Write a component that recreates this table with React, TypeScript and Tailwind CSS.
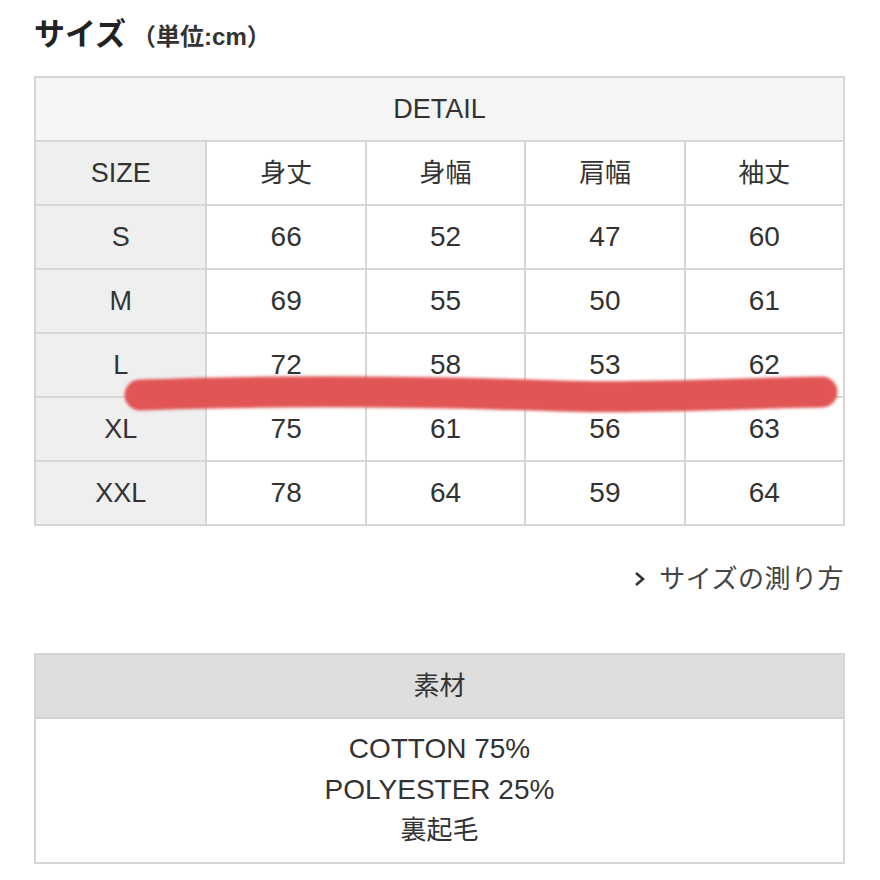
const cols = ['身丈', '身幅', '肩幅', '袖丈'];
const rows = [
  { size: 'S', v: ['66', '52', '47', '60'] },
  { size: 'M', v: ['69', '55', '50', '61'] },
  { size: 'L', v: ['72', '58', '53', '62'] },
  { size: 'XL', v: ['75', '61', '56', '63'] },
  { size: 'XXL', v: ['78', '64', '59', '64'] },
];

const font = { fontFamily: '"Liberation Sans", "Noto Sans CJK JP", sans-serif' };

export default function App() {
  return (
    <div className="relative w-[880px] h-[880px] bg-white text-[#333]" style={font}>
      <div className="px-[34px] pt-[12px]">
        <h2 className="flex items-baseline h-[40px]">
          <span className="text-[31px] font-bold text-[#222]">サイズ</span>
          <span className="text-[24px] font-bold text-[#333] ml-[6px]">（単位:cm）</span>
        </h2>

        <table className="mt-[24px] w-[811px] border-collapse border-2 border-[#d6d6d6] text-[28px] text-[#333]">
          <tbody>
            <tr className="h-[64px] bg-[#f5f5f5]">
              <td colSpan={5} className="border-2 border-[#d6d6d6] text-center text-[27px]">DETAIL</td>
            </tr>
            <tr className="h-[64px]">
              <td className="w-[172px] border-2 border-[#d6d6d6] bg-[#efefef] text-center text-[27px]">SIZE</td>
              {cols.map((c) => (
                <td key={c} className="border-2 border-[#d6d6d6] text-center text-[26px]">{c}</td>
              ))}
            </tr>
            {rows.map((r) => (
              <tr key={r.size} className="h-[64px]">
                <td className="border-2 border-[#d6d6d6] bg-[#efefef] text-center text-[27px]">{r.size}</td>
                {r.v.map((x, i) => (
                  <td key={i} className="w-[160px] border-2 border-[#d6d6d6] text-center">{x}</td>
                ))}
              </tr>
            ))}
          </tbody>
        </table>

        <div className="flex justify-end items-center mt-[36px] pr-[2px] text-[26px] text-[#444] h-[34px]">
          <svg width="14" height="18" viewBox="0 0 14 18" className="mr-[12px]">
            <path d="M3 3 L10 9 L3 15" fill="none" stroke="#333" strokeWidth="2.6" />
          </svg>
          <span className="tracking-[0.5px]">サイズの測り方</span>
        </div>

        <div className="mt-[57px] w-[811px] border-2 border-[#d6d6d6]">
          <div className="h-[64px] bg-[#dedede] border-b-2 border-[#d0d0d0] flex items-center justify-center text-[26px]">素材</div>
          <div className="flex flex-col items-center pt-[9px] pb-[11px] text-[28px] leading-[41px]">
            <span>COTTON 75%</span>
            <span>POLYESTER 25%</span>
            <span className="text-[26px]">裏起毛</span>
          </div>
        </div>
      </div>

      <svg className="absolute left-0 top-0 pointer-events-none" width="880" height="880">
        <defs>
          <filter id="soft" filterUnits="userSpaceOnUse" x="0" y="340" width="880" height="120">
            <feGaussianBlur stdDeviation="1.6" />
          </filter>
        </defs>
        <path
          d="M140 395 C 300 389, 470 393, 560 396 S 740 393, 822 392"
          fill="none"
          stroke="#e15454"
          strokeWidth="31"
          strokeLinecap="round"
          filter="url(#soft)"
        />
      </svg>
    </div>
  );
}
